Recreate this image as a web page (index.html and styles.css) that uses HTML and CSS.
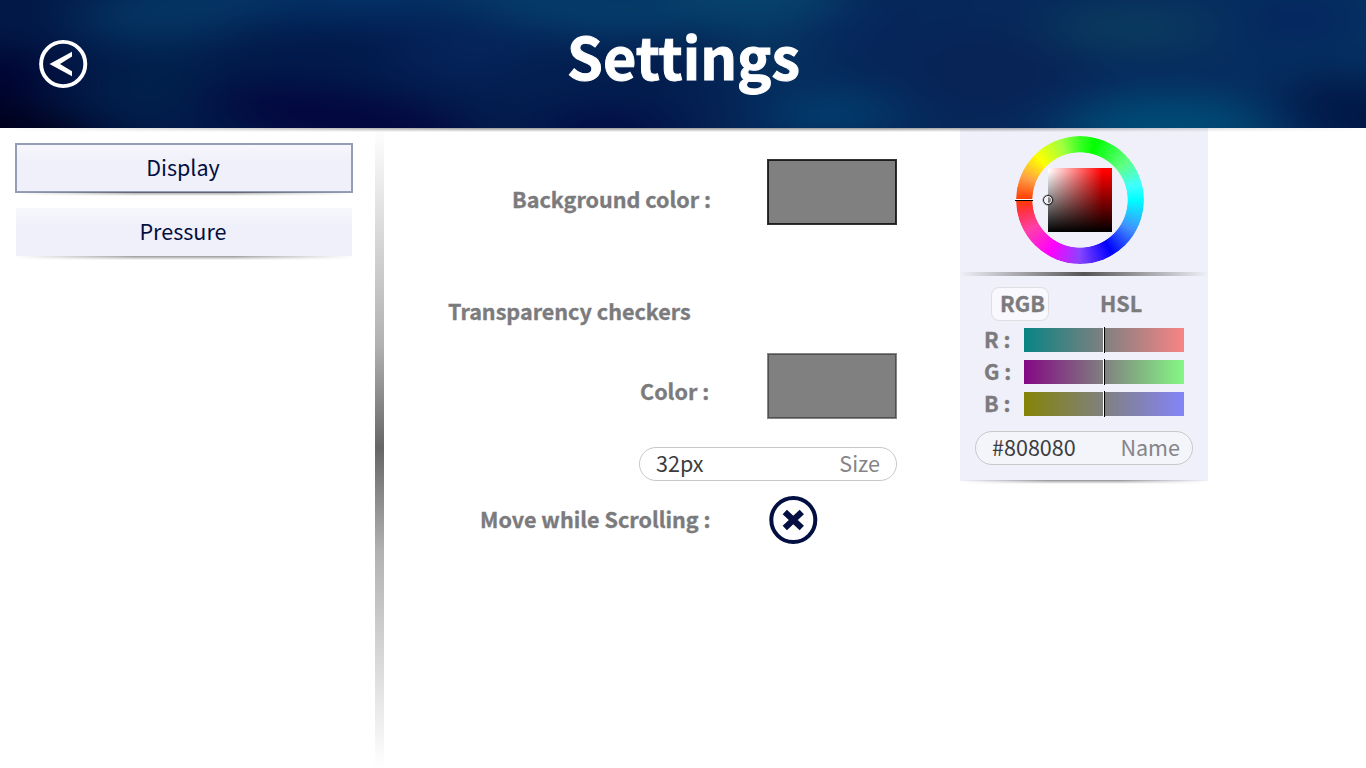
FILE: index.html
```html
<!DOCTYPE html>
<html lang="en">
<head>
<meta charset="utf-8">
<title>Settings</title>
<link rel="stylesheet" href="styles.css">
</head>
<body>
<header class="header">
  <svg class="backdrop" viewBox="0 0 1366 128" preserveAspectRatio="none" aria-hidden="true">
    <defs>
      <filter id="soft" filterUnits="userSpaceOnUse" x="-100" y="-60" width="1566" height="248" color-interpolation-filters="sRGB"><feGaussianBlur stdDeviation="32 17"/></filter>
      <linearGradient id="sea"><stop offset="0" stop-color="#021845"/><stop offset=".3" stop-color="#021a4c"/><stop offset=".5" stop-color="#042253"/><stop offset=".7" stop-color="#06285a"/><stop offset="1" stop-color="#053163"/></linearGradient>
    </defs>
    <g filter="url(#soft)">
      <rect x="-100" y="-60" width="1566" height="248" fill="url(#sea)"/>
      <ellipse cx="5" cy="135" rx="110" ry="34" fill="#00001c" transform="rotate(12 5 135)"/>
      <ellipse cx="-10" cy="75" rx="62" ry="26" fill="#000230"/>
      <ellipse cx="190" cy="5" rx="115" ry="36" fill="#043462" transform="rotate(-8 190 5)"/>
      <ellipse cx="155" cy="85" rx="55" ry="34" fill="#01214c" transform="rotate(-20 155 85)"/>
      <ellipse cx="345" cy="120" rx="135" ry="27" fill="#03063e" transform="rotate(9 345 120)"/>
      <ellipse cx="360" cy="-8" rx="120" ry="28" fill="#033268"/>
      <ellipse cx="465" cy="50" rx="65" ry="30" fill="#05245a"/>
      <ellipse cx="570" cy="5" rx="120" ry="30" fill="#053c6a" transform="rotate(8 570 5)"/>
      <ellipse cx="750" cy="-6" rx="95" ry="38" fill="#06426c"/>
      <ellipse cx="650" cy="72" rx="65" ry="28" fill="#031c4e"/>
      <ellipse cx="610" cy="130" rx="75" ry="22" fill="#020c44"/>
      <ellipse cx="770" cy="58" rx="60" ry="24" fill="#063260"/>
      <ellipse cx="830" cy="114" rx="70" ry="26" fill="#033c6e"/>
      <ellipse cx="870" cy="30" rx="50" ry="26" fill="#06265c"/>
      <ellipse cx="995" cy="72" rx="85" ry="40" fill="#082356"/>
      <ellipse cx="1130" cy="28" rx="85" ry="26" fill="#0a3a5e"/>
      <ellipse cx="1165" cy="130" rx="105" ry="36" fill="#004a76"/>
      <ellipse cx="1300" cy="20" rx="34" ry="18" fill="#052060"/>
      <ellipse cx="1365" cy="118" rx="80" ry="38" fill="#011746" transform="rotate(15 1365 118)"/>
    </g>
  </svg>
  <button class="back" aria-label="Back">
    <svg width="50" height="50" viewBox="0 0 50 50"><circle cx="25.2" cy="25" r="22.1" fill="none" stroke="#fff" stroke-width="3.9"/><path d="M11.5 25 34 12.7V17.6L22 25 34 32.2V37.2Z" fill="#fff"/></svg>
  </button>
  <h1 class="title">Settings</h1>
</header>
<div class="body">
  <nav class="nav">
    <button class="tab tab-active"><span>Display</span></button>
    <button class="tab"><span>Pressure</span></button>
  </nav>
  <div class="divider"></div>
  <main class="form">
    <div class="row row-bg"><span class="label">Background color :</span><span class="swatch swatch-focus"></span></div>
    <h2 class="label section">Transparency checkers</h2>
    <div class="row row-color"><span class="label">Color :</span><span class="swatch"></span></div>
    <div class="field size-field"><span class="value">32px</span><span class="hint">Size</span></div>
    <div class="row row-move"><span class="label">Move while Scrolling :</span>
      <svg class="check" width="50" height="50" viewBox="0 0 50 50"><circle cx="25.3" cy="25" r="22" fill="none" stroke="#020f40" stroke-width="4"/><path d="M16.8 17 33.8 33M33.8 17 16.8 33" stroke="#020f40" stroke-width="6.2"/></svg>
    </div>
  </main>
  <aside class="picker">
    <div class="wheel">
      <div class="ring"></div>
      <div class="shade"></div>
      <i class="hue-mark"></i>
      <i class="shade-mark"></i>
    </div>
    <div class="rule"></div>
    <div class="modes"><span class="mode mode-on">RGB</span><span class="mode">HSL</span></div>
    <div class="channels">
      <div class="channel"><span class="label">R :</span><span class="slider red"><i></i></span></div>
      <div class="channel"><span class="label">G :</span><span class="slider green"><i></i></span></div>
      <div class="channel"><span class="label">B :</span><span class="slider blue"><i></i></span></div>
    </div>
    <div class="field name-field"><span class="value">#808080</span><span class="hint">Name</span></div>
  </aside>
</div>
</body>
</html>
```
FILE: styles.css
```css
* { box-sizing: border-box; }
body {
  margin: 0; height: 768px; overflow: hidden; background: #fff;
  font: 21.55px/32px "Noto Sans CJK JP", "Noto Sans CJK SC", sans-serif;
  color: #7b7b7d;
}
button { border: 0; margin: 0; padding: 0; font: inherit; background: none; }
.header {
  position: relative; z-index: 2; height: 128px; padding: 0 38px;
  display: grid; grid-template-columns: 50px 1fr 50px; align-items: center;
  background: #021a4b;
}
.backdrop { position: absolute; inset: 0; width: 100%; height: 128px; }
.header::after {
  content: ""; position: absolute; left: 0; right: 0; top: 128px; height: 4px;
  background: linear-gradient(#0006, #0000);
  -webkit-mask: linear-gradient(90deg, transparent, #000 35%, #000 65%, transparent);
}
.back { position: relative; }
.back, .back svg { display: block; width: 50px; height: 50px; }
.title { position: relative; margin: -18px 0 0 1px; text-align: center; font-size: 57.5px; line-height: 90px; font-weight: 700; color: #fff; -webkit-text-stroke: 1px #fff; }
.body { display: grid; grid-template-columns: 375px 9px 576px 248px; height: 640px; align-items: start; }
.nav { display: grid; gap: 16px; padding: 16px 23px 0 16px; }
.tab {
  position: relative; height: 48px; color: #020f40;
  background: linear-gradient(#f7f8fc, #f0f0fa 35%); line-height: 44px; padding: 0 2px 2px 0;
}
.tab-active { outline: 2px solid #979db5; outline-offset: -1px; }
.tab::after {
  content: ""; position: absolute; left: 0; right: 0; top: 100%; height: 4px;
  background: linear-gradient(#0006, #0000);
  -webkit-mask: linear-gradient(90deg, transparent, #000 35%, #000 65%, transparent);
}
.divider { height: 640px; background: linear-gradient(#66666600, #b1b1b1 34%, #666 50%, #b1b1b1 66%, #66666600); }
.form { padding: 31px 63px 0 64px; display: flex; flex-direction: column; }
.label { font-weight: 700; line-height: 32px; margin: 0; font-size: 21.55px; -webkit-text-stroke: .35px currentColor; }
.row { display: flex; align-items: center; justify-content: space-between; }
.row-bg { padding-left: 64px; height: 66px; }
.row-bg .label { margin-top: 14px; }
.swatch { width: 130px; height: 66px; background: #808080; border: 1px solid #858585; outline: 1px solid #505050; outline-offset: -2px; }
.swatch-focus { border-color: #333; outline-color: #1e1e1e; }
.section { margin-top: 70px; }
.row-color { margin-top: 26px; padding-left: 192px; height: 66px; }
.row-color .label { margin-top: 10px; }
.field {
  height: 34px; border: solid #c8c8ca; border-width: 1px; border-radius: 17px; padding: 0 16px;
  display: flex; justify-content: space-between; line-height: 29px;
}
.value { color: #3c3c3e; }
.hint { color: #858587; }
.size-field { margin: 28px 0 0 191px; width: 258px; }
.row-move { height: 50px; margin-top: 14px; padding: 0 79px 0 32px; }
.row-move .label { margin-top: -3px; }
.check { display: block; }
.picker { position: relative; height: 353px; background: #f0f0fa; padding: 8px 15px 0; display: flex; flex-direction: column; }
.picker::after {
  content: ""; position: absolute; left: 0; right: 0; top: 352px; height: 4px;
  background: linear-gradient(#0006, #0000);
  -webkit-mask: linear-gradient(90deg, transparent, #000 35%, #000 65%, transparent);
}
.wheel { position: relative; width: 128px; height: 128px; align-self: center; margin-left: -8px; display: grid; place-items: center; }
.ring {
  grid-area: 1 / 1; width: 128px; height: 128px; border-radius: 50%;
  background: conic-gradient(#39ff24 0deg, #0f0 15deg, #60ff80 50deg, #40ffff 75deg, #0ff 90deg, #4090ff 120deg, #00f 149deg, #8844ff 180deg, #f0f 210deg, #ff40a8 240deg, #ff3347 258deg, #ff3800 270deg, #ffa044 292deg, #ff0 315deg, #a0ff40 342deg, #39ff24 360deg);
  -webkit-mask: radial-gradient(circle, transparent 47.3px, #000 48px);
}
.shade { grid-area: 1 / 1; width: 64px; height: 64px; background: linear-gradient(#0000 5%, #000), linear-gradient(90deg, #fff, #f00 85%); }
.hue-mark { position: absolute; left: -1px; top: 63px; width: 18px; height: 2px; background: linear-gradient(#fff 50%, #000 50%); }
.shade-mark { position: absolute; left: 27px; top: 59px; width: 10px; height: 10px; border: 1.5px solid #222; border-radius: 50%; box-shadow: 0 0 0 .5px #2228, inset 0 0 0 1px #fff; }
.rule { height: 4px; margin: 8px -15px 0; background: linear-gradient(90deg, #5550, #555 50%, #5550); }
.modes { display: grid; grid-template-columns: 58px 1fr; column-gap: 51px; padding-left: 16px; margin-top: 11px; height: 34px; }
.mode { font-weight: 700; line-height: 31px; -webkit-text-stroke: .35px currentColor; }
.mode-on { background: #f8f8fd; border: 1px solid #dedee3; border-radius: 8px; line-height: 29px; padding-left: 8px; }
.channels { display: grid; row-gap: 8px; margin-top: 7px; padding: 0 9px; }
.channel { display: grid; grid-template-columns: 40px 160px; height: 24px; }
.channel .label { line-height: 21px; }
.slider { position: relative; height: 24px; }
.slider i { position: absolute; left: 79px; top: -1px; width: 2px; height: 26px; background: linear-gradient(90deg, #fff 50%, #000 50%); }
.red { background: linear-gradient(90deg, #088484, #808080, #f88484); }
.green { background: linear-gradient(90deg, #840884, #808080, #84f884); }
.blue { background: linear-gradient(90deg, #848408, #808080, #8484f8); }
.name-field { margin-top: 15px; width: 218px; background: #f4f4fb; padding: 0 12px 0 16px; }
```
